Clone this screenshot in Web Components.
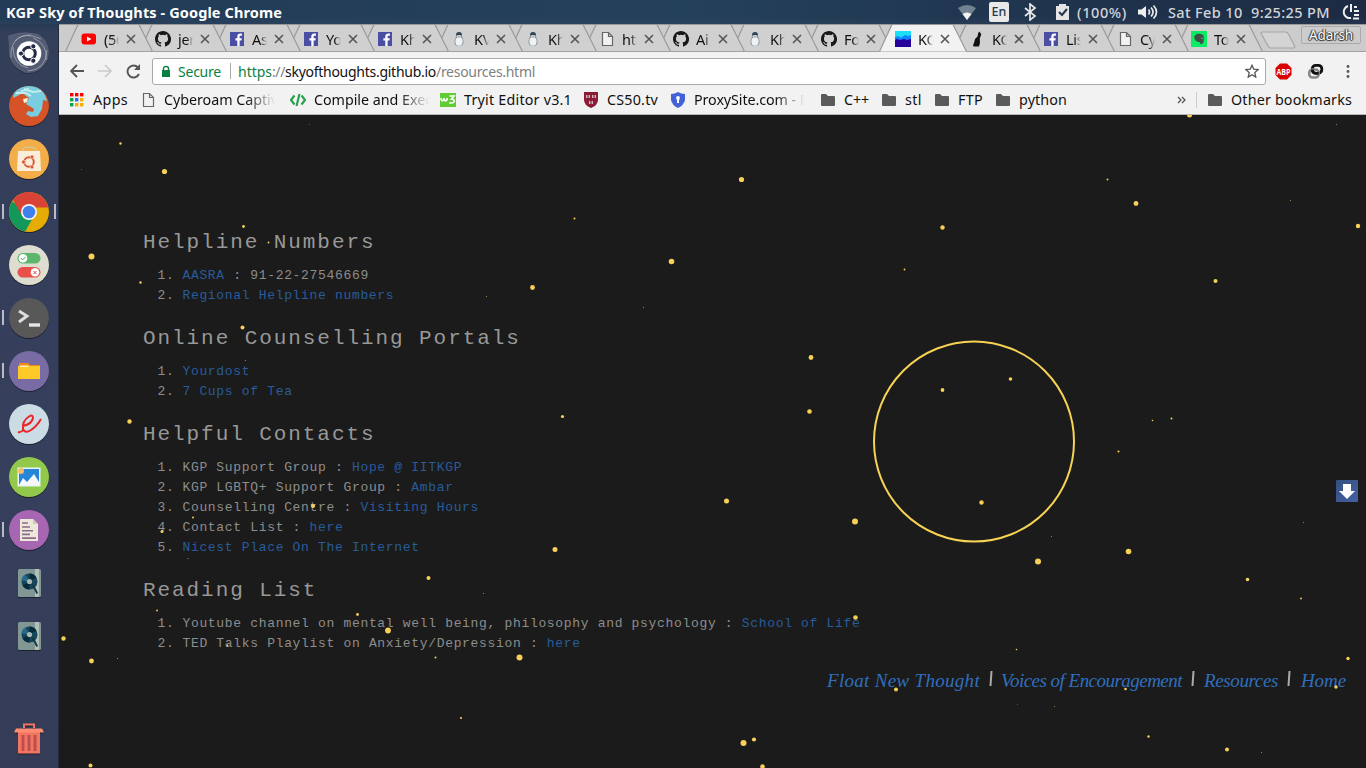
<!DOCTYPE html>
<html lang="en"><head><meta charset="utf-8"><title>KGP Sky of Thoughts</title>
<style>html,body{margin:0;width:1366px;height:768px;overflow:hidden;background:#1b1b1b}</style></head>
<body><desktop-screen></desktop-screen>
<script>
const define=(name,render)=>customElements.define(name,class extends HTMLElement{
  connectedCallback(){if(this.shadowRoot)return;this.attachShadow({mode:'open'}).innerHTML=render(this)}});

/* A single line of text whose tracking is adjusted to fill the given width. */
customElements.define('fit-text',class extends HTMLElement{
  connectedCallback(){
    if(this.shadowRoot)return;
    const w=+this.getAttribute('w');
    this.attachShadow({mode:'open'}).innerHTML=`<style>:host{display:inline-block;flex:none;white-space:pre;width:${w}px}span{display:inline-block}</style><span><slot></slot></span>`;
    const s=this.shadowRoot.querySelector('span'),n=this.textContent.length;
    s.style.letterSpacing=((w-s.getBoundingClientRect().width)/n)+'px';
  }});

const page='<path d="M3.5 1.5h6l4 4v9h-10z M9.5 1.5v4h4" fill="#f1f1f1" stroke="#666" stroke-width="1.2"/>';
const icons={
 yt:'<rect x=".5" y="2.5" width="14.5" height="11" rx="3" fill="#f00"/><path d="M6 5.5v5l4.5-2.5z" fill="#fff"/>',
 gh:'<path fill="#191717" d="M8 0C3.58 0 0 3.58 0 8c0 3.54 2.29 6.53 5.47 7.59.4.07.55-.17.55-.38v-1.49c-2.01.37-2.53-.49-2.69-.94-.09-.23-.48-.94-.82-1.13-.28-.15-.68-.52-.01-.53.63-.01 1.08.58 1.23.82.72 1.21 1.87.87 2.33.66.07-.52.28-.87.51-1.07-1.78-.2-3.64-.89-3.64-3.95 0-.87.31-1.59.82-2.15-.08-.2-.36-1.02.08-2.12 0 0 .67-.21 2.2.82a7.6 7.6 0 0 1 4 0c1.53-1.04 2.2-.82 2.2-.82.44 1.1.16 1.92.08 2.12.51.56.82 1.27.82 2.15 0 3.07-1.87 3.75-3.65 3.95.29.25.54.73.54 1.48v2.2c0 .21.15.46.55.38A8 8 0 0 0 8 0z"/>',
 fb:'<path fill="#4a4fa3" d="M1 1h14v14H1z"/><path fill="#fff" d="M8.3 15V9.5H6.4V7.3h1.9V5.6c0-2 1.1-3 3-3h1.6v2.1h-1.2c-.8 0-1.1.4-1.1 1.1v1.5h2.2l-.4 2.2h-1.8V15z"/>',
 peng:'<path d="M5 5Q4.500 1 8 1t3 4l1.500 5q.8 5-4.500 5t-4.500-5z" fill="#8a959e"/><path d="M5 4.500Q5 1 8 1t3 3.500z" fill="#34495e"/><ellipse cx="8" cy="10.5" rx="3.6" ry="4.2" fill="#eef2f4"/><path d="M5.500 4h5l-1 2h-3z" fill="#f2f2f2"/><circle cx="6.6" cy="3.800" r=".6" fill="#222"/><circle cx="9.4" cy="3.800" r=".6" fill="#222"/><path d="M7 4.800h2l-1 1.500z" fill="#777"/>',
 page,
 sky:'<path fill="#25009a" d="M0 0h16v16H0z"/><path fill="#1bdff7" d="M0 0h16v5l-3 1-3-1-4 2-3-1-3 1z"/><path fill="#1481ff" d="m0 6 3-1 3 2 4-3 3 1 3-1v4l-4 1-3-1-4 1-3-1-2 1z"/>',
 cat:'<path d="M10.500.500 9.200 2 8.500 5.500Q5.500 7.500 5.300 11L4 14.500q0 1 1.500 1H10q1.500-4 .8-8L11.700 5l.6-2-1-1z" fill="#111"/>',
 ever:'<path d="M0 0h16v16H0z" fill="#08ed63"/><path d="M3 5.500 6 2.8q5-.7 6.4 1.4.8 3.1.2 6.6-.5 2.5-3 2.2-1.4-.5-.8-2H7Q3.7 10 3 5.500z" fill="#405047"/><path d="M10 7q1.5 0 1.5 1" stroke="#08ed63" fill="none"/>',
 apps:['#f00','#f00','#f00','#0ba24f','#2770e8','#f7ad00','#0ba24f','#f7ad00','#f7ad00'].map((c,i)=>`<path fill="${c}" d="M${1+i%3*5} ${1+(i/3|0)*5}h3.4v3.4h-3.4z"/>`).join(''),
 code:'<path d="M4.5 3.5 1 8l3.5 4.5M11.5 3.5 15 8l-3.5 4.5M9.5 2l-3 12" fill="none" stroke="#24a04a" stroke-width="2.1"/>',
 w3:'<path d="M0 1h16v14H0z" fill="#61cc35"/><path d="M1 6q0 3 1.700 2.600Q4 8.500 4 6q0 3 1.700 2.600Q7.300 8.500 7.300 6M9.500 4H14l-2.5 3.2q3 0 2.800 2-.5 2.5-5 1.600" fill="none" stroke="#fff" stroke-width="1.6"/>',
 cs:'<path d="M1 0h14v8q0 5-7 8-7-3-7-8z" fill="#8b1b36"/><path d="M3 3h4v3H3zM9 3h4v3H9zM6 9h4v3H6z" fill="#d6b9be"/><path d="M5 3v3m6-3v3M8 9v3" stroke="#611326"/>',
 shield:'<path d="M8 0q3 2 7 2v6q-1 5-7 8-6-3-7-8V2q4 0 7-2z" fill="#4262d6"/><circle cx="8" cy="6" r="1.9" fill="#fff"/><path d="M7 7h2v4H7z" fill="#fff"/>',
 folder:'<path d="M1 3q0-1 1-1h4l2 2h6q1 0 1 1v8q0 1-1 1H2q-1 0-1-1z" fill="#5a5a5a"/>'};
const ic=(n,s=16)=>`<svg width="${s}" height="${s}" viewBox="0 0 16 16">${icons[n]}</svg>`;

define('system-bar',()=>`<style>:host{display:flex;box-sizing:border-box;height:24px;align-items:center;padding-left:6px;background:linear-gradient(180deg,#0000 70%,#3d4b6340),linear-gradient(90deg,#233b57,#24415b 50%,#213751 70%,#1c2b43);font:500 14.500px/24px "Noto Sans";color:#d8dce0}
b{font-weight:700;font-size:14.500px;color:#fff;flex:1}svg,.en{flex:none;display:block}.en{width:20px;height:20px;background:#e9e9e9;border-radius:2px;color:#27384e;font-size:12.5px;line-height:20px;text-align:center;margin:0 14px 0 13px}.s{color:#d2d5d9}</style>
<b><fit-text w="276">KGP Sky of Thoughts - Google Chrome</fit-text></b>
<svg width="18" height="18" viewBox="0 0 18 18"><path d="M0 5Q9-1 18 5L9 17z" fill="#738292"/><path d="M4.500 11q4.500-3 9 0L9 17z" fill="#f5f5f5"/></svg>
<span class="en">En</span>
<svg width="16" height="18" viewBox="0 0 16 18"><path d="m2 5 10 8-5 4V1l5 4-10 8" stroke="#e8e8e8" stroke-width="1.7" fill="none"/></svg>
<svg style="margin-left:16px" width="15" height="18" viewBox="0 0 15 18"><path d="M1 3h3V1h7v2h3v14H1z" fill="#e5e5e5"/><path d="m4 9 3 3 5-6" stroke="#22364f" stroke-width="2" fill="none"/></svg>
<fit-text class="s" style="margin-left:7px" w="50">(100%)</fit-text>
<svg style="margin:0 10px 0 10px" width="21" height="18" viewBox="0 0 21 18"><path d="M1 6.500h3.500L9 3v12l-4.500-3.500H1z" fill="#eee"/><path d="M11.500 6.500q2 2.500 0 5M14 4.500q4 4.500 0 9M16.500 2.500q6 6.500 0 13" fill="none" stroke="#e9e9e9" stroke-width="1.7"/></svg>
<fit-text class="s" w="162">Sat Feb 10  9:25:25 PM</fit-text>
<svg style="margin:0 6px 0 12px" width="18" height="18" viewBox="0 0 18 18"><path d="M6 3a6.2 6.2 0 0 0 3 12M9 1v8" stroke="#eee" stroke-width="2" fill="none"/><path d="M12 4h3M12 8h5M12 12h5M11 15.5h6" stroke="#eee" stroke-width="2"/></svg>`);

const disc='<rect x="9" y="6" width="23" height="28" rx="1.5" fill="#809794"/><path d="M26 6h4v28h-4z" fill="#b3beb6"/><circle cx="20.5" cy="18.5" r="8" fill="#17475b"/><path d="M20.500 18.500V10.500a8 8 0 0 1 6.900 4zM20.500 18.500V26.500a8 8 0 0 1-6.900-4z" fill="#062c3b"/><path d="m20.500 18.500-8-1a8 8 0 0 1 4-6z" fill="#26698a"/><circle cx="20.500" cy="18.500" r="2.600" fill="#aab8b3"/><path d="m22 21 3 1 4 8-1.500 1z" fill="#123845"/>';
const apps={
 dash:'<path d="M-1 3Q12-3 29 1q14 9 10 25-7 15-22 14Q-2 33 0 14z" fill="#78829a" opacity=".55"/><path d="M2 25Q1 2 22 2M38 17q-1 20-19 21M6 8Q15-2 32 6M4 14q0 18 15 21M37 27q2-16-13-22" stroke="#a7adb9" stroke-width="1" fill="none" opacity=".8"/><circle cx="20" cy="20.500" r="12.300" fill="#fff"/><circle cx="20" cy="20.500" r="6.300" stroke="#242b46" stroke-width="3" fill="none"/><g fill="#242b46" stroke="#fff"><circle cx="12" cy="20.500" r="2.600"/><circle cx="24.300" cy="13.300" r="2.600"/><circle cx="24.300" cy="27.700" r="2.600"/></g>',
 fox:'<circle cx="20" cy="20" r="20" fill="#d65327"/><path d="M5 7Q11 0 20 0q9 0 14 6 3 4 4 9l-4-1-1 9-4 7-7 1-5-3 2-3 5 1 1-3-3-2-5-3 3-6-3-2-3-3-6 3-4 2z" fill="#78cee0"/><path d="m7 7 10 0 5 3M15 3l9 3 8-1M12 5l8-2" stroke="#c6ebef" stroke-width="2" fill="none"/><path d="m14 13 5-1-1 4-3 1z" fill="#fff0d9"/>',
 store:'<circle cx="20" cy="20" r="20" fill="#f4ae49"/><path d="M12 16q0-8 8-8t8 8" stroke="#d9c48d" stroke-width="1.500" fill="none"/><path d="M9 12h22l1 20H8z" fill="#faeedb"/><circle cx="20" cy="23" r="4.800" fill="none" stroke="#db542c" stroke-width="1.900"/><g fill="#db542c" stroke="#faeedb" stroke-width=".6"><circle cx="14.500" cy="23" r="1.900"/><circle cx="23" cy="18" r="1.900"/><circle cx="23" cy="28" r="1.900"/></g>',
 chrome:'<circle cx="20" cy="20" r="20" fill="#e5ac05"/><path d="M20 20 3 9.500a20 20 0 0 0 13 30.200l8.500-15z" fill="#12985a"/><path d="m20 20-7 3.500L4 8a20 20 0 0 1 35.500 7.500H20z" fill="#d94337"/><circle cx="20" cy="20" r="8" fill="#f4f4ef"/><circle cx="20" cy="20" r="6.300" fill="#3f80ee"/>',
 toggle:'<circle cx="20" cy="20" r="20" fill="#dddecf"/><rect x="8.500" y="8" width="23" height="10.500" rx="5.250" fill="#5cb76c"/><rect x="8.500" y="22" width="23" height="10.500" rx="5.250" fill="#e95049"/><circle cx="14" cy="13.300" r="4.300" fill="#fff"/><circle cx="26" cy="27.300" r="4.300" fill="#fff"/><path d="m12 13 1.500 2 3-3" fill="none" stroke="#4eae65"/><path d="m24.500 26 3 3m0-3-3 3" stroke="#d94949"/>',
 term:'<circle cx="20" cy="20" r="20" fill="#585858"/><path d="m10 13 8 5-8 6" stroke="#dedede" stroke-width="2.900" fill="none"/><path d="M20 27h11" stroke="#e6e6e6" stroke-width="3.400"/>',
 files:'<circle cx="20" cy="20" r="20" fill="#796ca4"/><path d="M10 12h9l2 2h10v3H10z" fill="#f48916"/><path d="M9 15h22v13H9z" fill="#ffc928"/><path d="M11 14.500h9l-1 1.500h-8z" fill="#fff0bb"/>',
 evince:'<circle cx="20" cy="20" r="20" fill="#ccdce4"/><path d="M9 28q3 1 6-3M14 22q9-2 10-8 0-4-4-1.500Q13 17 14 25q2 5 8 1 6-4 10-11" fill="none" stroke="#eb2627" stroke-width="2"/>',
 image:'<circle cx="20" cy="20" r="20" fill="#92c94b"/><path d="M8.500 10.500h23v19h-23z" fill="#e9f5fa"/><path d="M10 12h20v16H10z" fill="#2685d8"/><circle cx="12" cy="14" r="3" fill="#ffba65"/><path d="m10 28 4-7 4 4 7-8 5 8v3z" fill="#f5f7f9"/>',
 doc:'<circle cx="20" cy="20" r="20" fill="#a666b1"/><path d="M11 9h13l5 5v17H11z" fill="#ede9da"/><path d="M24 9v5h5" fill="#cfc8bd"/><path d="M13 13h6m-6 4h8m-8 3.700h11m-11 3.700h8m-8 3.700h14" stroke="#8e6b8b" stroke-width="1.600"/>',
 disc,trash:'<path d="M9 12h22v22.500H9z" fill="#f37461"/><path d="m5 13.500 2-4h26l2 4z" fill="#ff8c73"/><path d="M15 9V5.500h10V9" stroke="#f27562" stroke-width="2" fill="none"/><path d="M14 16v16m6-16v16m6-16v16" stroke="#bd4e50" stroke-width="3"/>'};
define('launcher-item',e=>`<style>:host{display:flex;height:53px;align-items:center;padding-left:9px;position:relative;box-sizing:border-box}svg{overflow:visible;filter:drop-shadow(0 1px .5px #0007)}i{position:absolute;width:2px;height:15px;background:#b9bcc5;left:2px;top:19px}i+i{left:54px}</style>
${e.hasAttribute('run')?'<i></i>':''}${e.hasAttribute('active')?'<i></i>':''}<svg width="40" height="40" viewBox="0 0 40 40">${apps[e.getAttribute('app')]}</svg>`);
define('app-launcher',()=>`<style>:host{display:flex;flex-direction:column;width:59px;background:linear-gradient(#253a54,#333e59 8px,#363f5c 60%,#343c57);box-sizing:border-box;padding:2px 0 3px;border-right:1px solid #222b3d}.x{flex:1}</style>
<launcher-item app="dash"></launcher-item><launcher-item app="fox"></launcher-item><launcher-item app="store"></launcher-item><launcher-item app="chrome" run active></launcher-item><launcher-item app="toggle"></launcher-item><launcher-item app="term" run></launcher-item><launcher-item app="files" run></launcher-item><launcher-item app="evince"></launcher-item><launcher-item app="image"></launcher-item><launcher-item app="doc" run></launcher-item><launcher-item app="disc"></launcher-item><launcher-item app="disc"></launcher-item><div class="x"></div><launcher-item app="trash"></launcher-item>`);

define('browser-tab',e=>{const a=e.hasAttribute('active');return `<style>:host{display:grid;grid-template:28px/88px;margin-right:-14px;position:relative;flex:none}.bg,.c{grid-area:1/1}.c{display:flex;align-items:center;padding:2px 0 0 16px;z-index:1;font:14.500px/22px "Noto Sans";color:#111}.c>svg{flex:none}.t{width:15px;margin:0 7px 0 6px;padding-left:1px;letter-spacing:-.3px;overflow:hidden;white-space:nowrap;-webkit-mask:linear-gradient(90deg,#000 60%,transparent);mask:linear-gradient(90deg,#000 60%,transparent)}</style>
<svg class="bg" width="88" height="28"><path d="M.5 27.500 12.500 1.500q.5-1 1.500-1h59q1 0 1.500 1l13 26" fill="${a?'#f2f2f2':'#d0d0d0'}" stroke="#999" stroke-width="1.200"/>${a?'':'<path d="M0 27.500h88" stroke="#a2a2a2"/>'}</svg>
<div class="c">${ic(e.getAttribute('icon'))}<div class="t"><slot></slot></div><svg width="10" height="10"><path d="m1 1 8 8m0-8-8 8" stroke="#555" stroke-width="1.600"/></svg></div>`});
const tabs=[['yt','(56'],['gh','jer'],['fb','As'],['fb','Yo'],['fb','Kh'],['peng','KV'],['peng','Kh'],['page','htt'],['gh','Ai'],['peng','Kh'],['gh','Fo'],['sky','KG'],['cat','KG'],['fb','Lis'],['page','Cy'],['ever','To']];
define('tab-strip',()=>`<style>:host{display:flex;height:28px;background:linear-gradient(#999 1px,#ccc 1px,#ccc 27px,#a2a2a2 27px);padding-left:6px;box-sizing:border-box}.new{margin:7px 0 0 11px;flex:none}.u{margin:2px 5px 0 auto;height:18px;box-sizing:border-box;border:1px solid #aaa;border-radius:2px;padding:0 7px;font:13.500px/17px "Noto Sans";color:#fff;text-shadow:0 0 1px #222,1px 0 1px #333,-1px 0 1px #333,0 1px 1px #333}</style>
${tabs.map(([i,t],n)=>`<browser-tab icon="${i}" style="z-index:${n==11?30:20-n}" ${n==11?'active':''}>${t}</browser-tab>`).join('')}
<svg class="new" width="36" height="18"><path d="M1.500 3q-1-2 1-2h23q2 0 3 2l6 12q1 2-1 2H11q-2 0-3-2z" fill="#d4d4d4" stroke="#a5a5a5" stroke-width="1.200"/></svg><div class="u"><fit-text w="44">Adarsh</fit-text></div>`);

define('address-bar',()=>`<style>:host{display:flex;height:38px;align-items:center;background:#f2f2f2;box-sizing:border-box;padding-left:11px;font:14px/25px "Noto Sans"}svg{flex:none}.o{display:flex;align-items:center;width:1114px;height:27px;box-sizing:border-box;border:1px solid #aaa;border-radius:3px;background:#fff;margin-left:11px;padding-left:8px}.g{color:#0b8043}.l{width:1px;height:16px;background:#aaa;margin:0 7px 0 9px}.d{color:#808080}.k{color:#111}.o>svg:last-child{margin:0 6px 0 auto}</style>
<svg width="14" height="14"><path d="M14 7H1.500M7 1 1 7l6 6" fill="none" stroke="#555" stroke-width="1.900"/></svg>
<svg style="margin-left:14px" width="14" height="14"><path d="M0 7h12.500M7 1l6 6-6 6" fill="none" stroke="#ccc" stroke-width="1.700"/></svg>
<svg style="margin-left:14px" width="15" height="15"><path d="M13 10a6 6 0 1 1-1-6.500" fill="none" stroke="#555" stroke-width="1.900"/><path d="M14 0v6H8z" fill="#555"/></svg>
<div class="o"><svg width="10" height="13"><path d="M1 5h8v7H1z" fill="#0b8043"/><path d="M2.500 6V3.500q0-2 2.500-2t2.500 2V6" stroke="#0b8043" stroke-width="1.400" fill="none"/></svg><fit-text class="g" style="margin-left:7px" w="43">Secure</fit-text><span class="l"></span><fit-text class="g" w="34">https</fit-text><fit-text class="d" w="13">://</fit-text><fit-text class="k" w="151">skyofthoughts.github.io</fit-text><fit-text class="d" w="99">/resources.html</fit-text>
<svg width="14" height="14" viewBox="0 0 16 16"><path d="m8 1.500 2 4.500 5 .500-3.800 3.300L12.300 15 8 12.300 3.700 15l1.100-5.200L1 6.500 6 6z" fill="none" stroke="#555" stroke-width="1.500"/></svg></div>
<svg style="margin-left:9px" width="17" height="17"><path d="M5 .5h7L16.500 5v7L12 16.500H5L.5 12V5z" fill="#d80000"/><text x="8.500" y="11.600" text-anchor="middle" textLength="14" lengthAdjust="spacingAndGlyphs" fill="#fff" font-family="Open Sans" font-weight="700" font-size="8">ABP</text></svg>
<svg style="margin-left:15px" width="17" height="17"><rect x="5.300" y="2.300" width="9.500" height="8" rx="3.500" fill="none" stroke="#111" stroke-width="2.800"/><rect x="2.200" y="6.500" width="9.500" height="8" rx="3.500" fill="none" stroke="#888" stroke-width="2.600"/><path d="M5.300 6.500q0 3.800 3.500 3.800h3" stroke="#111" stroke-width="2.600" fill="none"/></svg>
<svg style="margin-left:22px" width="4" height="15"><g fill="#555"><circle cx="2" cy="2.500" r="1.400"/><circle cx="2" cy="7.500" r="1.400"/><circle cx="2" cy="12.500" r="1.400"/></g></svg>`);

/* icon, gap before, label, label width, faded at its end */
const marks=[['apps',10,'Apps',35],['page',12,'Cyberoam Captiv',114,1],['code',12,'Compile and Exec',118,1],['w3',8,'Tryit Editor v3.1',108],['cs',11,'CS50.tv',51],['shield',12,'ProxySite.com - F',113,1],['folder',13,'C++',25],['folder',12,'stl',17],['folder',12,'FTP',25],['folder',12,'python',48]];
define('bookmark-link',e=>`<style>:host{display:flex;flex:none;align-items:center}svg{margin-right:8px}.f{-webkit-mask:linear-gradient(90deg,#000 72%,transparent 98%);mask:linear-gradient(90deg,#000 72%,transparent 98%)}</style>${ic(e.getAttribute('icon'))}<fit-text class="${e.hasAttribute('fade')?'f':''}" w="${e.getAttribute('w')}">${e.getAttribute('label')}</fit-text>`);
define('bookmark-bar',()=>`<style>:host{display:flex;box-sizing:border-box;height:25px;align-items:center;padding-bottom:4px;background:#f2f2f2;border-bottom:1px solid #b7b7b7;font:14.300px/20px "Noto Sans";color:#111}.m{margin-left:auto}.v{width:1px;height:16px;background:#ccc;margin:0 10px 0 10px}</style>
${marks.map(([i,g,t,w,f])=>`<bookmark-link icon="${i}" style="margin-left:${g}px" w="${w}" label="${t}" ${f?'fade':''}></bookmark-link>`).join('')}
<svg class="m" width="9" height="8"><path d="m1 1 3 3-3 3M5 1l3 3-3 3" fill="none" stroke="#555" stroke-width="1.300"/></svg><span class="v"></span><bookmark-link style="margin-right:14px" icon="folder" w="121" label="Other bookmarks"></bookmark-link>`);

/* Fireflies: x, y, radius on the page canvas. */
const flies=[[120,143,1.2],[164,171,2.600],[91,256,3],[741,179,2.600],[574,218,1],[671,261,2.800],[532,287,2.400],[243,226,1.400],[268,242,.9],[140,282,1.200],[486,296,.6],[643,307,.6],[242,327,2],[245,360,.6],[562,416,1.600],[129,421,2.200],[312.500,505.500,2.100],[161.500,531,1.500],[192.500,517,1],[187.500,558,.6],[554.500,549,2.500],[428,577.500,2],[483,593,.6],[156.500,610,.9],[357,614,1.400],[387.500,630,2.900],[227,645,.9],[435,657,1],[519,657,3],[63,638,2.200],[91,660.500,2.400],[117,658,.6],[460.500,717.500,1.100],[743,742.500,3],[753.500,739,2.100],[90,765,2],[762,766,2.300],[726,500.500,2.500],[854.500,521,3],[855,617,2.300],[809,411,2.300],[810.500,357,2.400],[942,227,2.200],[904,269,.9],[1107,179,.9],[1135.500,203,2.400],[1290,200,.6],[1215,280.500,2],[1357.500,225.500,2.200],[1189,114.500,2.500],[942,389.500,1.900],[1010,378.500,1.800],[981,502,2.200],[1037.500,561,3],[1128,551,2.800],[1051,536,.5],[1118,451,1],[1152,420,.8],[1171,418,1],[1247,579,1.800],[1303,522,.5],[1300.500,598,.9],[1016,649,.8],[1347.500,658,1.700],[895.500,689,2],[1125,688.500,1.300],[1335.500,686.500,1.700],[1226.500,749,2],[1148,736,1.200],[1261,752,.6],[81,169,.4],[309,124,.4],[1336,124,.5],[1017,704,.4],[1054,706,.5]];
define('firefly-sky',()=>`<style>:host{display:block}svg{display:block}</style><svg width="1307" height="653" viewBox="59 115 1307 653">
<circle cx="974" cy="441.500" r="100" fill="none" stroke="#f7d354" stroke-width="2"/>${flies.map(([x,y,r])=>`<circle cx="${x+.5}" cy="${y+.5}" r="${r}" fill="#f7d058" opacity="${r<.7?.7:1}"/>`).join('')}</svg>`);

define('resource-section',e=>`<style>:host{display:block;color:#8d8d8d;font:13px/20px "Liberation Mono"}h2{box-sizing:border-box;padding-top:1px;margin:0 0 11px;font:400 21px/26px "Liberation Mono";color:#989898;height:26px}::slotted(resource-row){display:flex}</style><h2><fit-text w="${e.getAttribute('title-text').length*14.530}">${e.getAttribute('title-text')}</fit-text></h2><slot></slot>`);
define('resource-row',e=>{const n=e.getAttribute('n'),a=e.getAttribute('pre')||'',b=e.getAttribute('link')||'',c=e.getAttribute('post')||'';const f=(t,k)=>t?`<fit-text class="${k}" w="${t.length*8.475}">${t}</fit-text>`:'';
 return `<style>:host{height:20px;white-space:pre}.n{margin:0 8px 0 14.500px}.a{color:#285c9b}</style>${f(n+'.','n')}${f(a,'')}${f(b,'a')}${f(c,'')}`});
define('resource-list',()=>`<style>:host{display:flex;flex-direction:column;gap:19px;padding:114px 0 0 84px;height:425px}</style>
<resource-section title-text="Helpline Numbers"><resource-row n="1" link="AASRA" post=" : 91-22-27546669"></resource-row><resource-row n="2" link="Regional Helpline numbers"></resource-row></resource-section>
<resource-section title-text="Online Counselling Portals"><resource-row n="1" link="Yourdost"></resource-row><resource-row n="2" link="7 Cups of Tea"></resource-row></resource-section>
<resource-section title-text="Helpful Contacts"><resource-row n="1" pre="KGP Support Group : " link="Hope @ IITKGP"></resource-row><resource-row n="2" pre="KGP LGBTQ+ Support Group : " link="Ambar"></resource-row><resource-row n="3" pre="Counselling Centre : " link="Visiting Hours"></resource-row><resource-row n="4" pre="Contact List : " link="here"></resource-row><resource-row n="5" link="Nicest Place On The Internet"></resource-row></resource-section>
<resource-section title-text="Reading List"><resource-row n="1" pre="Youtube channel on mental well being, philosophy and psychology : " link="School of Life"></resource-row><resource-row n="2" pre="TED Talks Playlist on Anxiety/Depression : " link="here"></resource-row></resource-section>`);
define('footer-nav',()=>`<style>:host{display:flex;align-items:center;justify-content:flex-end;height:30px;padding-right:20px;font:italic 19px/30px "Liberation Serif";color:#2f6fbd}i{width:1.500px;height:15px;background:#aaa;transform:skewX(-4deg);margin:0 11px 5px 9.500px}</style>
<fit-text w="153">Float New Thought</fit-text><i style="margin-right:10px"></i><fit-text w="181">Voices of Encouragement</fit-text><i></i><fit-text w="74">Resources</fit-text><i style="margin-right:12px"></i><fit-text w="45">Home</fit-text>`);
define('web-page',()=>`<style>:host{display:grid;grid-template:653px/1307px;background:#1b1b1b;position:relative;overflow:hidden}firefly-sky,main{grid-area:1/1}main{display:flex;flex-direction:column}.d{position:absolute;left:1277px;top:365px}</style>
<main><resource-list></resource-list><footer-nav style="margin-top:12px"></footer-nav></main><firefly-sky></firefly-sky>
<svg class="d" width="22" height="22"><defs><linearGradient id="g" x2="1" y2="1"><stop stop-color="#34507f"/><stop offset="1" stop-color="#4560a4"/></linearGradient></defs><rect width="22" height="22" rx="1" fill="url(#g)"/><path d="M7 4h8v7h4l-8 8-8-8h4z" fill="#fff"/></svg>`);
define('browser-window',()=>`<style>:host{display:flex;flex-direction:column;width:1307px;overflow:hidden}</style><tab-strip></tab-strip><address-bar></address-bar><bookmark-bar></bookmark-bar><web-page></web-page>`);
define('desktop-screen',()=>`<style>:host{display:flex;flex-direction:column;width:1366px;height:768px}.r{display:flex;height:744px}</style><system-bar></system-bar><div class="r"><app-launcher></app-launcher><browser-window></browser-window></div>`);
</script></body></html>
